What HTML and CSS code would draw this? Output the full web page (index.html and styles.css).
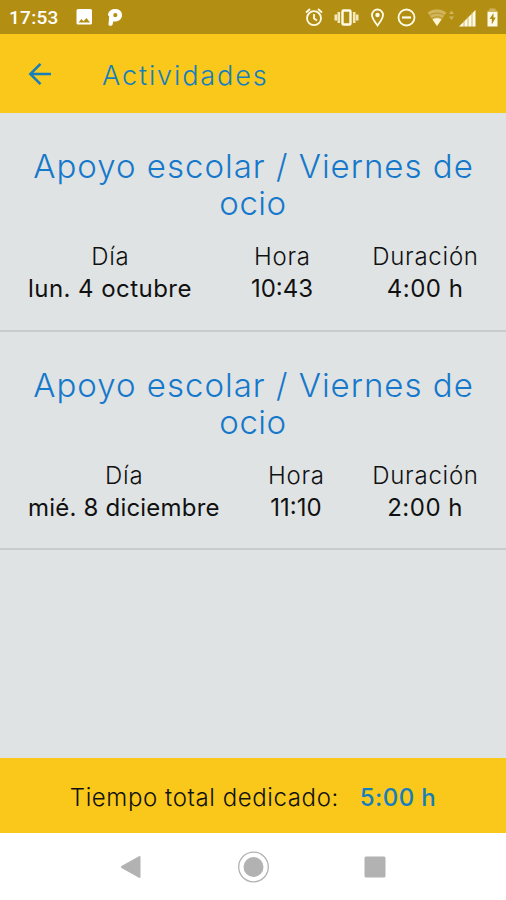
FILE: index.html
```html
<!DOCTYPE html>
<html lang="es">
<head>
<meta charset="utf-8">
<title>Actividades</title>
<link rel="stylesheet" href="styles.css">
</head>
<body>
<div class="status">
  <span class="clock">17:53</span>
  <svg class="notifications" width="50" height="20" viewBox="75 7 50 20">
    <path fill="#fff" fill-rule="evenodd" d="M78 9h12.500q1.500 0 1.500 1.500v12.500q0 1.500-1.500 1.500h-12.500q-1.500 0-1.500-1.500v-12.500q0-1.500 1.500-1.500ZM78.500 22.500h11.500l-3.500-4.500-3 3.300-2-2.300Z"/>
    <path fill="#fff" fill-rule="evenodd" d="M108 14.500C108.500 11 111.500 9 115.500 9c4 0 6.500 2.500 6.500 6 0 4-3 6.500-7 6.500h-1.800l-.6 3c-.3 1.800-4 1.800-4.100 0l.7-8.500q-1.300 0-1.200-1.500ZM115.300 13a2.100 2.100 0 1 0 .1 4.200 2.100 2.100 0 0 0-.1-4.200Z"/>
  </svg>
  <svg class="system" width="200" height="34" viewBox="300 0 200 34" fill="none" stroke="#fffbe9" stroke-width="1.800">
    <circle cx="314" cy="18.200" r="7"/><path d="M314 14v4.500l3 2M306 12.500l4-3.500M322 12.500l-4-3.500"/>
    <rect x="342.500" y="10.500" width="8" height="14" rx="1" stroke-width="2.400"/>
    <path stroke-width="2.600" stroke="#f4e8bd" d="M338.800 12v11M354.200 12v11M335.800 14.500v6M357.200 14.500v6"/>
    <path d="M377.500 25.500c-3-4-5.500-7-5.500-10.500a5.500 5.500 0 0 1 11 0c0 3.500-2.500 6.500-5.500 10.500Z"/><circle cx="377.500" cy="15" r="2.200" fill="#fffbe9" stroke="none"/>
    <circle cx="406.500" cy="17.500" r="8"/><path stroke-width="2.200" d="M402 17.500h9"/>
    <path fill="#d1b55d" stroke="none" d="M427.500 12.500q9.500-6.500 19 0l-9.500 13.500Z"/>
    <path fill="#fff5d0" stroke="none" d="M432.500 19.500q4.500-2.500 9 0l-4.500 6.500Z"/>
    <path stroke="#b28e13" stroke-width=".8" d="M429 15.500q8-5 16 0M431.500 18.500q5.500-3.500 11 0"/>
    <path fill="#d1b55d" stroke="none" d="m449 14 2.500-3.500 2.500 3.500ZM449 16.500h5l-2.500 3.500Z"/>
    <path fill="#fffbe9" stroke="none" d="M459 26.500 475.500 10v16.500Z"/><path stroke="#c4a541" stroke-width=".8" d="M464 20v7M468 16v11M472 12v15"/>
    <path fill="#fffbe9" stroke="none" d="M487.500 12h10v14.500h-10Z"/><path fill="#d1b55d" stroke="none" d="M487.500 12v-1.500h2v-2h6v2h2v1.500Z"/><path fill="#b28e13" stroke="none" d="m493.500 13-4 6h2.300v5.500l4-7h-2.300Z"/>
  </svg>
</div>
<header class="bar">
  <svg width="24" height="24" viewBox="0 0 24 24" fill="none" stroke="#157fbd" stroke-width="2.500"><path d="M23 12H2.500M12.500 1.800 2.300 12l10.200 10.200"/></svg>
  <h1>Actividades</h1>
</header>
<main>
  <section class="activity">
    <h2><span class="t-title">Apoyo escolar / Viernes de</span><br><span class="t-ocio">ocio</span></h2>
    <div class="details">
      <dl><dt>Día</dt><dd class="t-oct">lun. 4 octubre</dd></dl>
      <dl><dt>Hora</dt><dd>10:43</dd></dl>
      <dl><dt>Duración</dt><dd class="t-h">4:00 h</dd></dl>
    </div>
  </section>
  <section class="activity">
    <h2><span class="t-title">Apoyo escolar / Viernes de</span><br><span class="t-ocio">ocio</span></h2>
    <div class="details">
      <dl><dt>Día</dt><dd class="t-dic">mié. 8 diciembre</dd></dl>
      <dl><dt>Hora</dt><dd>11:10</dd></dl>
      <dl><dt>Duración</dt><dd class="t-h">2:00 h</dd></dl>
    </div>
  </section>
</main>
<footer class="total"><span>Tiempo total dedicado:</span><strong>5:00 h</strong></footer>
<nav class="nav">
  <svg width="22" height="24" viewBox="0 0 22 24"><path fill="#b2b2b2" d="M1.500 11 19 1.200q1.500-.7 1.500 1v19.600q0 1.700-1.500 1L1.500 13q-1.500-1 0-2Z"/></svg>
  <svg width="32" height="32" viewBox="0 0 32 32"><circle cx="16.500" cy="16" r="14.800" fill="none" stroke="#b2b2b2" stroke-width="1.300"/><circle cx="16.500" cy="16" r="10" fill="#b2b2b2"/></svg>
  <svg width="22" height="22" viewBox="0 0 22 22"><rect x=".5" y=".5" width="21" height="21" rx="1.500" fill="#b2b2b2"/></svg>
</nav>
</body>
</html>
```
FILE: styles.css
```css
* { box-sizing: border-box; margin: 0; padding: 0; }
body {
  width: 506px; height: 900px; overflow: hidden;
  display: flex; flex-direction: column;
  font-family: Inter, "Liberation Sans", sans-serif;
  font-weight: 300; color: #111; background: #dfe3e4;
}
svg { display: block; flex: none; }
.status { height: 34px; background: #b28e13; display: flex; align-items: center; padding: 0 6px 0 9px; }
.clock { width: 66px; font: 500 19px/34px Roboto, sans-serif; color: #fff; letter-spacing: .3px; padding-top: 2px; }
.system { margin-left: auto; }
.bar { height: 79px; background: #f9c81a; display: flex; align-items: center; padding-left: 28px; gap: 50px; }
.bar h1 { font-size: 27px; font-weight: 350; line-height: 34px; letter-spacing: 1.900px; color: #157fbd; padding-top: 4px; }
main { flex: 1; }
.activity { height: 218.500px; padding: 35px 28px 0; border-bottom: 2px solid #c8cccd; }
h2 { font-size: 33px; line-height: 37px; font-weight: 330; color: #1678ca; text-align: center; white-space: nowrap; margin: 0 -10px; }
.t-title { letter-spacing: 1px; margin-right: -1px; }
.t-ocio { letter-spacing: .5px; }
.details { display: flex; justify-content: space-between; margin-top: 19px; text-align: center; font-size: 24px; line-height: 32px; white-space: nowrap; }
dt { letter-spacing: .75px; margin-right: -.75px; }
dd { font-weight: 400; }
.t-oct { letter-spacing: .45px; }
.t-dic { letter-spacing: .2px; }
.t-h { letter-spacing: .5px; }
.total { height: 75px; background: #f9c81a; display: flex; align-items: center; justify-content: center; gap: 21px; font-size: 24px; letter-spacing: .6px; padding-top: 4px; white-space: nowrap; }
.total strong { font-weight: 500; color: #157fbd; letter-spacing: .4px; }
.nav { height: 67px; background: #fff; display: flex; align-items: center; justify-content: space-between; padding: 0 120px 0 120px; }
```
